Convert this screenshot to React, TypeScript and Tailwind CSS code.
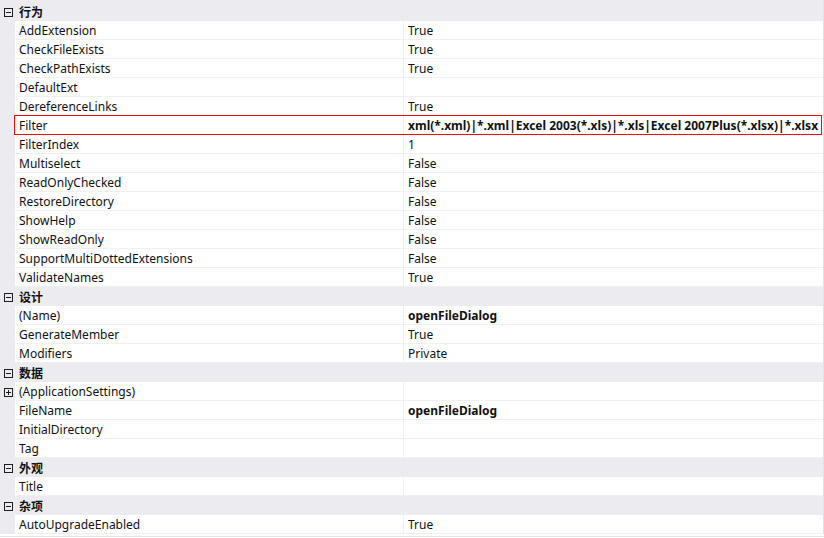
type Row =
  | { kind: 'cat'; label: string }
  | { kind: 'prop'; name: string; value?: string; bold?: boolean; expand?: boolean; selected?: boolean };

const rows: Row[] = [
  { kind: 'cat', label: '行为' },
  { kind: 'prop', name: 'AddExtension', value: 'True' },
  { kind: 'prop', name: 'CheckFileExists', value: 'True' },
  { kind: 'prop', name: 'CheckPathExists', value: 'True' },
  { kind: 'prop', name: 'DefaultExt' },
  { kind: 'prop', name: 'DereferenceLinks', value: 'True' },
  {
    kind: 'prop',
    name: 'Filter',
    value: 'xml(*.xml)|*.xml|Excel 2003(*.xls)|*.xls|Excel 2007Plus(*.xlsx)|*.xlsx',
    bold: true,
    selected: true,
  },
  { kind: 'prop', name: 'FilterIndex', value: '1' },
  { kind: 'prop', name: 'Multiselect', value: 'False' },
  { kind: 'prop', name: 'ReadOnlyChecked', value: 'False' },
  { kind: 'prop', name: 'RestoreDirectory', value: 'False' },
  { kind: 'prop', name: 'ShowHelp', value: 'False' },
  { kind: 'prop', name: 'ShowReadOnly', value: 'False' },
  { kind: 'prop', name: 'SupportMultiDottedExtensions', value: 'False' },
  { kind: 'prop', name: 'ValidateNames', value: 'True' },
  { kind: 'cat', label: '设计' },
  { kind: 'prop', name: '(Name)', value: 'openFileDialog', bold: true },
  { kind: 'prop', name: 'GenerateMember', value: 'True' },
  { kind: 'prop', name: 'Modifiers', value: 'Private' },
  { kind: 'cat', label: '数据' },
  { kind: 'prop', name: '(ApplicationSettings)', expand: true },
  { kind: 'prop', name: 'FileName', value: 'openFileDialog', bold: true },
  { kind: 'prop', name: 'InitialDirectory' },
  { kind: 'prop', name: 'Tag' },
  { kind: 'cat', label: '外观' },
  { kind: 'prop', name: 'Title' },
  { kind: 'cat', label: '杂项' },
  { kind: 'prop', name: 'AutoUpgradeEnabled', value: 'True' },
];

function Toggle({ plus }: { plus?: boolean }) {
  return (
    <svg width="9" height="9" viewBox="0 0 9 9" className="block">
      <rect x="0.5" y="0.5" width="8" height="8" fill="none" stroke="#1e1e1e" />
      <path d="M2 4.5H7" stroke="#1e1e1e" />
      {plus && <path d="M4.5 2V7" stroke="#1e1e1e" />}
    </svg>
  );
}

export default function App() {
  return (
    <div
      className="w-[824px] h-[538px] bg-white overflow-hidden text-[12px] text-[#111]"
      style={{ fontFamily: '"Noto Sans", "Noto Sans CJK SC", sans-serif' }}
    >
      <div className="bg-[#ececf0] pt-[2px] border-r border-[#e3e3e3]">
        {rows.map((r, i) =>
          r.kind === 'cat' ? (
            <div key={i} className="h-[19px] flex items-center pt-[2px]">
              <div className="w-[15px] flex justify-center pl-[1px]">
                <Toggle />
              </div>
              <span className="pl-[4px] font-bold leading-none">{r.label}</span>
            </div>
          ) : (
            <div key={i} className="relative h-[19px] flex">
              <div className="w-[15px] shrink-0 flex items-center justify-center pl-[1px] pt-[2px]">
                {r.expand && <Toggle plus />}
              </div>
              <div className="flex-1 flex bg-white border-b border-[#f0f0f0]">
                <div className="w-[389px] shrink-0 flex items-center pl-[4px] pt-[2px] border-r border-[#f0f0f0] whitespace-nowrap">
                  {r.name}
                </div>
                <div
                  className={`flex-1 flex items-center pl-[4px] pt-[2px] whitespace-nowrap ${r.bold ? 'font-bold' : ''}`}
                >
                  {r.value}
                </div>
              </div>
              {r.selected && (
                <div className="absolute left-[14px] right-[1px] top-[-1px] bottom-0 border border-[#e81010]" />
              )}
            </div>
          )
        )}
      </div>
      <div className="h-[2px] bg-white" />
      <div className="h-[1px] bg-[#e6e6e6]" />
    </div>
  );
}
